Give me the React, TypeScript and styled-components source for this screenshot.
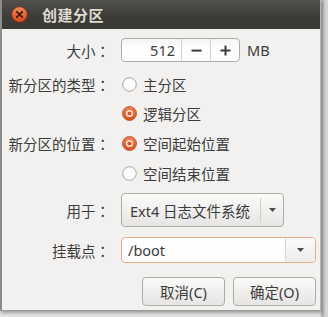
import React from "react";
import styled, { createGlobalStyle } from "styled-components";

const GlobalStyle = createGlobalStyle`
  html, body {
    margin: 0;
    padding: 0;
    background: #dddcda;
  }

  body {
    font-family: "Noto Sans", "Noto Sans CJK SC", sans-serif;
    color: #3c3c3c;
  }

  * {
    box-sizing: border-box;
  }
`;

const Screen = styled.div`
  width: 328px;
  height: 317px;
  overflow: hidden;
  background: linear-gradient(to right, #e4e3e1 320px, #a9a8a6 322px, #d6d5d3 326px);
`;

const Window = styled.div`
  width: 321px;
  height: 311px;
  display: flex;
  flex-direction: column;
  background: #f2f1f0;
  border-left: 2px solid #8d8c8a;
  border-bottom: 1px solid #9c9b99;
  border-right: 1px solid #b5b4b2;
  box-shadow: 1px 2px 3px rgba(0, 0, 0, 0.3);
`;

const TitleBar = styled.div`
  height: 29px;
  flex-shrink: 0;
  display: flex;
  align-items: center;
  gap: 14px;
  padding-left: 9px;
  background: linear-gradient(to bottom, #52514d, #3c3b37 60%, #3a3935);
`;

const Title = styled.span`
  color: #dfdbd2;
  font-size: 15px;
  font-weight: 700;
  letter-spacing: 0.5px;
`;

const Content = styled.div`
  display: flex;
  flex-direction: column;
  padding: 9px 4px 0 6px;
`;

const Row = styled.div<{ $mt: number; $h: number }>`
  display: grid;
  grid-template-columns: 102px auto;
  column-gap: 11px;
  align-items: center;
  margin-top: ${({ $mt }) => $mt}px;
  height: ${({ $h }) => $h}px;
`;

const Label = styled.span`
  text-align: right;
  font-size: 14.5px;
  white-space: nowrap;
`;

// full-width colon centred in its cell, as the dialog's font draws it
const Colon = styled.span`
  font-family: "Noto Sans CJK TC", sans-serif;
`;

const Inline = styled.div`
  display: flex;
  align-items: center;
`;

const SpinBox = styled.div`
  display: flex;
  width: 119px;
  height: 24px;
  border: 1px solid #aeaca8;
  border-radius: 4px;
  background: linear-gradient(to bottom, #f4f4f3, #fdfdfd 40%);
`;

const SpinValue = styled.span`
  flex: 1;
  text-align: right;
  padding-right: 6px;
  font-size: 14.5px;
  line-height: 22px;
`;

const SpinButton = styled.div`
  width: 29px;
  display: flex;
  align-items: center;
  justify-content: center;
  border-left: 1px solid #d6d4d1;
`;

const Unit = styled.span`
  margin-left: 7px;
  font-size: 14.5px;
`;

const RadioRow = styled.div`
  display: flex;
  align-items: center;
  gap: 6px;
  font-size: 14.5px;
  margin-left: 1px;
`;

const ComboButton = styled.div`
  width: 163px;
  height: 34px;
  display: flex;
  align-items: center;
  padding-left: 8px;
  border: 1px solid #aeaca8;
  border-radius: 4px;
  background: linear-gradient(to bottom, #fbfbfa, #f1f0ef 50%, #e6e5e3);
  font-size: 14.5px;
`;

const ComboText = styled.span`
  flex: 1;
  white-space: nowrap;
`;

const Separator = styled.div<{ $h: number }>`
  width: 1px;
  height: ${({ $h }) => $h}px;
  background: #d2d0cd;
`;

const ArrowCell = styled.div<{ $w: number }>`
  width: ${({ $w }) => $w}px;
  display: flex;
  align-items: center;
  justify-content: center;
  align-self: stretch;
`;

const Entry = styled.div`
  width: 195px;
  height: 26px;
  display: flex;
  align-items: center;
  border: 1px solid #e7ad8f;
  border-radius: 4px;
  background: #fefefe;
  overflow: hidden;
`;

const EntryText = styled.span`
  flex: 1;
  padding-left: 6px;
  font-size: 14.5px;
`;

const EntryButton = styled.div`
  width: 30px;
  align-self: stretch;
  display: flex;
  align-items: center;
  justify-content: center;
  border-left: 1px solid #dcdad7;
  background: linear-gradient(to bottom, #fbfbfa, #ecebe9);
`;

const Actions = styled.div`
  display: flex;
  justify-content: flex-end;
  gap: 8px;
  margin-top: 14px;
`;

const Button = styled.div`
  width: 83px;
  height: 29px;
  display: flex;
  align-items: center;
  justify-content: center;
  border: 1px solid #aeaca8;
  border-radius: 4px;
  background: linear-gradient(to bottom, #fbfbfa, #f0efee 50%, #e6e5e3);
  font-size: 14.5px;
`;

const CloseIcon = () => (
  <svg width="17" height="17" viewBox="0 0 17 17">
    <defs>
      <linearGradient id="cl" x1="0" y1="0" x2="0" y2="1">
        <stop offset="0" stopColor="#f58a5c" />
        <stop offset="1" stopColor="#d9461c" />
      </linearGradient>
    </defs>
    <circle cx="8.5" cy="8.5" r="7.8" fill="url(#cl)" stroke="#7a2b12" strokeWidth="0.8" />
    <path d="M5.8 5.8 L11.2 11.2 M11.2 5.8 L5.8 11.2" stroke="#3a1a0e" strokeWidth="1.8" strokeLinecap="round" />
  </svg>
);

const Radio: React.FC<{ checked?: boolean }> = ({ checked }) =>
  checked ? (
    <svg width="15" height="15" viewBox="0 0 15 15">
      <defs>
        <linearGradient id="rd" x1="0" y1="0" x2="0" y2="1">
          <stop offset="0" stopColor="#ec8358" />
          <stop offset="1" stopColor="#d5501f" />
        </linearGradient>
      </defs>
      <circle cx="7.5" cy="7.5" r="7" fill="url(#rd)" stroke="#b9481f" strokeWidth="0.8" />
      <circle cx="7.5" cy="7.5" r="3.6" fill="#fbe3d6" />
      <circle cx="7.5" cy="7.5" r="2.1" fill="#db5a28" />
    </svg>
  ) : (
    <svg width="15" height="15" viewBox="0 0 15 15">
      <circle cx="7.5" cy="7.5" r="6.8" fill="#fdfdfd" stroke="#9e9c98" strokeWidth="0.9" />
    </svg>
  );

const Minus = () => (
  <svg width="11" height="11" viewBox="0 0 11 11">
    <rect x="0.5" y="4.6" width="10" height="2" fill="#3c3c3c" />
  </svg>
);

const Plus = () => (
  <svg width="11" height="11" viewBox="0 0 11 11">
    <rect x="0.5" y="4.5" width="10" height="2" fill="#3c3c3c" />
    <rect x="4.5" y="0.5" width="2" height="10" fill="#3c3c3c" />
  </svg>
);

const DownArrow = () => (
  <svg width="9" height="6" viewBox="0 0 9 6">
    <path d="M1 1 L8 1 L4.5 5 Z" fill="#4a4a4a" />
  </svg>
);

const App: React.FC = () => {
  return (
    <>
      <GlobalStyle />
      <Screen>
        <Window>
          <TitleBar>
            <CloseIcon />
            <Title>创建分区</Title>
          </TitleBar>
          <Content>
            <Row $mt={0} $h={24}>
              <Label>
                大小<Colon>：</Colon>
              </Label>
              <Inline>
                <SpinBox>
                  <SpinValue>512</SpinValue>
                  <SpinButton>
                    <Minus />
                  </SpinButton>
                  <SpinButton>
                    <Plus />
                  </SpinButton>
                </SpinBox>
                <Unit>MB</Unit>
              </Inline>
            </Row>

            <Row $mt={11} $h={22}>
              <Label>
                新分区的类型<Colon>：</Colon>
              </Label>
              <RadioRow>
                <Radio />
                主分区
              </RadioRow>
            </Row>
            <Row $mt={7} $h={22}>
              <Label />
              <RadioRow>
                <Radio checked />
                逻辑分区
              </RadioRow>
            </Row>

            <Row $mt={8} $h={22}>
              <Label>
                新分区的位置<Colon>：</Colon>
              </Label>
              <RadioRow>
                <Radio checked />
                空间起始位置
              </RadioRow>
            </Row>
            <Row $mt={8} $h={22}>
              <Label />
              <RadioRow>
                <Radio />
                空间结束位置
              </RadioRow>
            </Row>

            <Row $mt={9} $h={34}>
              <Label>
                用于<Colon>：</Colon>
              </Label>
              <ComboButton>
                <ComboText>Ext4 日志文件系统</ComboText>
                <Separator $h={24} />
                <ArrowCell $w={22}>
                  <DownArrow />
                </ArrowCell>
              </ComboButton>
            </Row>

            <Row $mt={10} $h={26}>
              <Label>
                挂载点<Colon>：</Colon>
              </Label>
              <Entry>
                <EntryText>/boot</EntryText>
                <EntryButton>
                  <DownArrow />
                </EntryButton>
              </Entry>
            </Row>

            <Actions>
              <Button>取消(C)</Button>
              <Button>确定(O)</Button>
            </Actions>
          </Content>
        </Window>
      </Screen>
    </>
  );
};

export default App;
